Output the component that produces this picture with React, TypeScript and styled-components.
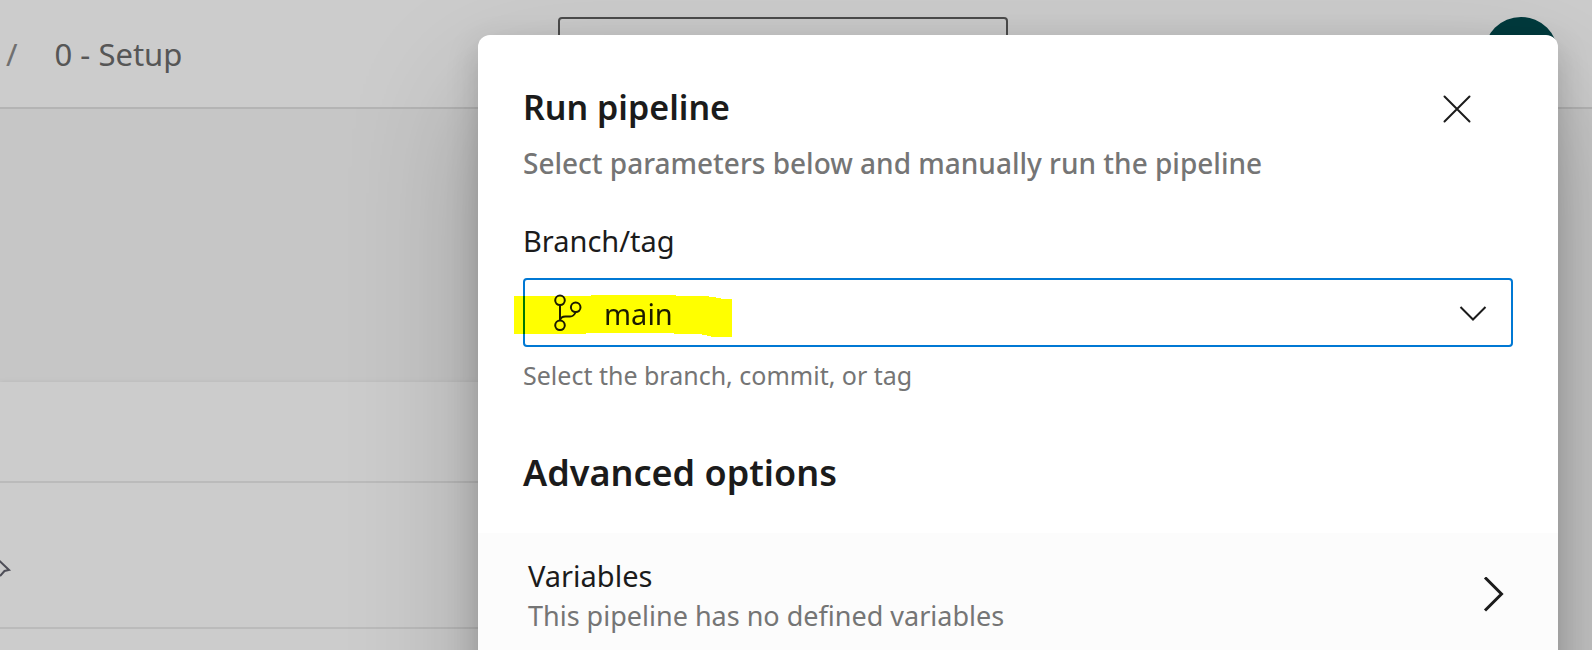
import React from 'react';
import styled, { createGlobalStyle } from 'styled-components';

const GlobalStyle = createGlobalStyle`
  *, *::before, *::after { box-sizing: border-box; }
  html, body, #root { height: 100%; }
  body {
    margin: 0;
    overflow: hidden;
    background: #f8f8f8;
    color: #1b1b1b;
    font-family: "Segoe UI", "Noto Sans", "Open Sans", sans-serif;
  }
  h1, h2, p { margin: 0; }
`;

const Page = styled.div`
  position: relative;
  display: flex;
  flex-direction: column;
  height: 100%;
  overflow: hidden;
`;

const Header = styled.header`
  display: grid;
  grid-template-columns: 559fr 999fr auto;
  align-items: center;
  flex: none;
  height: 109px;
  padding-right: 34px;
  border-bottom: 2px solid #e2e2e2;
  background: #ffffff;
`;

const Breadcrumb = styled.nav`
  display: flex;
  gap: 37px;
  padding-left: 6px;
  font-size: 31px;
  line-height: 40px;
  color: #6c6c6c;
`;

const Separator = styled.span`
  color: #8c8c8c;
`;

const CrumbLink = styled.a`
  color: inherit;
  text-decoration: none;
`;

const SearchBox = styled.input`
  width: 450px;
  height: 74px;
  margin-left: 26px;
  border: 2px solid #606060;
  border-radius: 4px;
  background: transparent;
`;

const Avatar = styled.div`
  width: 74px;
  height: 74px;
  border-radius: 50%;
  background: #004a4e;
`;

const Main = styled.main`
  display: flex;
  flex-direction: column;
  flex: 1;
  padding: 273px 64px 0 0;
`;

const RunList = styled.section`
  flex: 1;
  background: #ffffff;
  box-shadow: 0 1px 6px rgba(0, 0, 0, 0.1);
`;

const ListRow = styled.div<{ $height: number }>`
  display: flex;
  align-items: center;
  height: ${(p) => p.$height}px;
  padding-top: 30px;
  border-bottom: 2px solid #eaeaea;
`;

const Scrim = styled.div`
  position: absolute;
  inset: 0;
  background: rgba(0, 0, 0, 0.2);
`;

const Dialog = styled.div`
  position: absolute;
  top: 35px;
  right: 34px;
  bottom: -120px;
  left: 478px;
  display: flex;
  flex-direction: column;
  border-radius: 12px;
  background: #ffffff;
  box-shadow: 0 58px 130px rgba(0, 0, 0, 0.22), 0 11px 32px rgba(0, 0, 0, 0.18);
`;

const DialogHeader = styled.div`
  display: flex;
  justify-content: space-between;
  align-items: flex-start;
  padding: 50px 80px 0 45px;
`;

const TitleGroup = styled.div`
  display: flex;
  flex-direction: column;
  gap: 14px;
`;

const Title = styled.h1`
  font-size: 34px;
  line-height: 44px;
  font-weight: 600;
`;

const Subtitle = styled.p`
  font-size: 28px;
  line-height: 40px;
  font-weight: 500;
  color: #757575;
`;

const CloseButton = styled.button`
  display: flex;
  align-items: center;
  justify-content: center;
  width: 42px;
  height: 48px;
  padding: 0;
  border: 0;
  background: transparent;
  color: #1b1b1b;
`;

const Field = styled.div`
  display: flex;
  flex-direction: column;
  padding: 38px 45px 0;
`;

const FieldLabel = styled.label`
  margin-bottom: 17px;
  font-size: 29px;
  line-height: 40px;
`;

const SelectFrame = styled.div`
  position: relative;
  display: flex;
  isolation: isolate;
  background: #ffffff;
`;

const BranchSelect = styled.select`
  appearance: none;
  width: 100%;
  height: 69px;
  padding: 2px 80px 0 79px;
  border: 2px solid #0078d4;
  border-radius: 4px;
  outline: none;
  background: #ffffff;
  color: #1b1b1b;
  font-family: inherit;
  font-size: 29px;
  line-height: 40px;
`;

const BranchGlyph = styled.svg`
  position: absolute;
  left: 30px;
  top: 16px;
  pointer-events: none;
`;

const SelectArrow = styled.svg`
  position: absolute;
  right: 26px;
  top: 28px;
  pointer-events: none;
`;

const Highlight = styled.svg`
  position: absolute;
  left: -9px;
  top: 17px;
  mix-blend-mode: multiply;
  pointer-events: none;
`;

const Hint = styled.p`
  margin-top: 10px;
  font-size: 25px;
  line-height: 36px;
  color: #757575;
`;

const SectionTitle = styled.h2`
  padding: 56px 45px 36px;
  font-size: 36px;
  line-height: 48px;
  font-weight: 600;
`;

const OptionRow = styled.button`
  display: flex;
  align-items: center;
  justify-content: space-between;
  padding: 23px 53px 23px 50px;
  border: 0;
  background: #fcfcfc;
  color: #1b1b1b;
  font-family: inherit;
  text-align: left;
`;

const OptionText = styled.span`
  display: flex;
  flex-direction: column;
  line-height: 40px;
`;

const OptionName = styled.span`
  font-size: 29px;
`;

const OptionDetail = styled.span`
  font-size: 27px;
  color: #757575;
`;

export default function App() {
  return (
    <Page>
      <GlobalStyle />
      <Header>
        <Breadcrumb aria-label="Breadcrumb">
          <Separator>/</Separator>
          <CrumbLink href="#setup">0 - Setup</CrumbLink>
        </Breadcrumb>
        <SearchBox type="search" aria-label="Search" />
        <Avatar />
      </Header>
      <Main>
        <RunList>
          <ListRow $height={101} />
          <ListRow $height={146}>
            <svg width="12" height="26" viewBox="0 0 12 26" fill="none" stroke="#62626e" strokeWidth="2" aria-hidden="true">
              <path d="M-1 3.500 9 13 4.500 14 0 19" />
            </svg>
          </ListRow>
        </RunList>
      </Main>
      <Scrim />

      <Dialog role="dialog" aria-labelledby="dialog-title">
        <DialogHeader>
          <TitleGroup>
            <Title id="dialog-title">Run pipeline</Title>
            <Subtitle>Select parameters below and manually run the pipeline</Subtitle>
          </TitleGroup>
          <CloseButton type="button" aria-label="Close">
            <svg width="28" height="28" viewBox="0 0 28 28" fill="none" stroke="currentColor" strokeWidth="2" strokeLinecap="round">
              <path d="M1.500 1.500 26.500 26.500M26.500 1.500 1.500 26.500" />
            </svg>
          </CloseButton>
        </DialogHeader>

        <Field>
          <FieldLabel htmlFor="branch">Branch/tag</FieldLabel>
          <SelectFrame>
            <BranchSelect id="branch" defaultValue="main">
              <option value="main">main</option>
            </BranchSelect>
            <BranchGlyph width="30" height="38" viewBox="0 0 30 38" fill="none" stroke="#1b1b1b" strokeWidth="2">
              <circle cx="7" cy="6.300" r="4.800" />
              <circle cx="22.700" cy="13.300" r="4.800" />
              <circle cx="7" cy="31.300" r="4.800" />
              <path d="M7 11V26.600M22.700 18C21.500 21 20 22.500 17 22.500H12.500C9.500 22.500 7.500 23 7 26.500" />
            </BranchGlyph>
            <SelectArrow width="28" height="16" viewBox="0 0 28 16" fill="none" stroke="#1b1b1b" strokeWidth="2">
              <path d="M1.500 1 14 13.500 26.500 1" />
            </SelectArrow>
            <Highlight width="218" height="42" viewBox="0 0 218 42" fill="#ffff00" aria-hidden="true">
              <path d="M0 1H77V0H162V1H195V2H202V3H207V4H218V42H197V41H193V40H188V39H160V38H72V39H0Z" />
            </Highlight>
          </SelectFrame>
          <Hint>Select the branch, commit, or tag</Hint>
        </Field>

        <SectionTitle>Advanced options</SectionTitle>
        <OptionRow type="button">
          <OptionText>
            <OptionName>Variables</OptionName>
            <OptionDetail>This pipeline has no defined variables</OptionDetail>
          </OptionText>
          <svg width="22" height="38" viewBox="0 2 22 38" fill="none" stroke="currentColor" strokeWidth="3" aria-hidden="true">
            <path d="M2 2.500 18.500 19 2 35.500" />
          </svg>
        </OptionRow>
      </Dialog>
    </Page>
  );
}
